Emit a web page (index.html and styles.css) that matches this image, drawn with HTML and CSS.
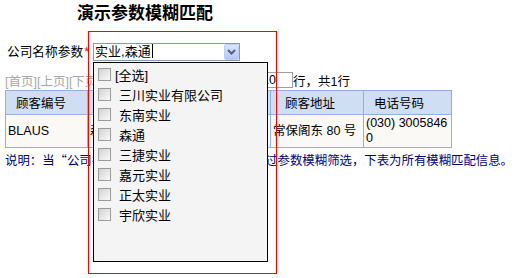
FILE: index.html
```html
<!DOCTYPE html>
<html lang="zh-CN">
<head>
    <meta charset="UTF-8">
    <meta name="viewport" content="width=device-width, initial-scale=1.0">
    <title>演示参数模糊匹配</title>
    <link rel="stylesheet" href="styles.css">
</head>
<body>
    <h1 class="title">演示参数模糊匹配</h1>

    <div class="query-row">
        <label class="query-label">公司名称参数<span class="required">*</span></label>
        <div class="picker">
            <div class="picker-box">
                <span class="picker-value">实业,森通</span>
                <span class="picker-btn">
                    <svg width="9" height="6" viewBox="0 0 9 6"><polyline points="1,1 4.5,4.5 8,1" fill="none" stroke="#4d6185" stroke-width="2"/></svg>
                </span>
            </div>
        </div>
    </div>

    <div class="pager">
        <span class="pager-links">[首页][上页][下页][尾页] 第1页/共1页 每页</span>
        <input class="pager-size" type="text" value="10">
        <span>行，共1行</span>
    </div>

    <table class="grid">
        <tr>
            <th class="c1">顾客编号</th>
            <th class="c2">公司名称</th>
            <th class="c3">联系人姓名</th>
            <th class="c4">顾客地址</th>
            <th class="c5">电话号码</th>
        </tr>
        <tr>
            <td>BLAUS</td>
            <td>森通</td>
            <td>王先生</td>
            <td>常保阁东 80 号</td>
            <td class="phone">(030) 30058460</td>
        </tr>
    </table>

    <p class="note">说明：当“公司名称参数”输入的多个值时，通过参数模糊筛选，下表为所有模糊匹配信息。</p>

    <ul class="picker-list">
        <li class="opt"><span class="check"></span><span>[全选]</span></li>
        <li class="opt"><span class="check"></span><span class="opt-name">三川实业有限公司</span></li>
        <li class="opt"><span class="check"></span><span class="opt-name">东南实业</span></li>
        <li class="opt"><span class="check"></span><span class="opt-name">森通</span></li>
        <li class="opt"><span class="check"></span><span class="opt-name">三捷实业</span></li>
        <li class="opt"><span class="check"></span><span class="opt-name">嘉元实业</span></li>
        <li class="opt"><span class="check"></span><span class="opt-name">正太实业</span></li>
        <li class="opt"><span class="check"></span><span class="opt-name">宇欣实业</span></li>
    </ul>

    <div class="frame"></div>
</body>
</html>
```

FILE: styles.css
```css
* {
    box-sizing: border-box;
}

html, body {
    min-height: 278px;
}

body {
    position: relative;
    margin: 0;
    font-family: 'Liberation Sans', 'Noto Sans CJK SC', sans-serif;
    font-size: 13px;
    color: #000;
    background: #fff;
}

.title {
    width: 290px;
    margin: 0;
    padding-top: 4px;
    font-size: 17px;
    line-height: 20px;
    font-weight: bold;
    text-align: center;
}

.query-row {
    display: flex;
    align-items: center;
    height: 18px;
    margin-top: 19px;
    padding-left: 7px;
    line-height: 18px;
}

.query-label {
    font-size: 12.7px;
}

.required {
    color: #f00;
    margin-left: 1px;
}

.picker {
    margin-left: 4px;
}

.picker-box {
    display: flex;
    align-items: center;
    width: 147px;
    height: 18px;
    border: 1px solid #7f9db9;
    background: #fff;
    padding-left: 1px;
}

.picker-value {
    flex: 1;
    line-height: 16px;
}

.picker-value::after {
    content: '';
    display: inline-block;
    width: 1px;
    height: 14px;
    background: #000;
    vertical-align: -2px;
    margin-left: 1px;
}

.picker-btn {
    display: flex;
    align-items: center;
    justify-content: center;
    width: 15px;
    height: 16px;
    border: 1px solid #b9cdf6;
    border-radius: 2px;
    background: linear-gradient(#d9e4fc, #b5c8f6);
}

/* dropdown of the picker, lies over the pager and the table */
.picker-list {
    position: absolute;
    left: 93px;
    top: 62px;
    width: 175px;
    height: 200px;
    margin: 0;
    padding: 1px 0 0 4px;
    list-style: none;
    border: 1px solid #000;
    background: #f4f4f4;
    z-index: 2;
}

.opt {
    display: flex;
    align-items: center;
    gap: 4px;
    height: 20px;
    font-size: 13px;
}

.check {
    width: 13px;
    height: 13px;
    border: 1px solid #9a9a9a;
    background: linear-gradient(135deg, #d2d2d2, #fbfbfb);
}

.opt-name {
    margin-left: 4px;
}

.pager {
    display: flex;
    align-items: center;
    height: 16px;
    margin-top: 11px;
    padding-left: 5px;
    font-size: 12.5px;
}

.pager-links {
    width: 252px;
    color: #a8a8a8;
    white-space: nowrap;
    overflow: hidden;
}

.pager-size {
    width: 36px;
    height: 16px;
    padding: 0 0 0 4px;
    border: 1px solid #a0a0a0;
    font: inherit;
    text-align: left;
}

.grid {
    margin: 2px 0 0 5px;
    width: 446px;
    border-collapse: collapse;
    table-layout: fixed;
    border: 1px solid #8db2e3;
    font-size: 12.5px;
}

.grid th {
    height: 24px;
    padding: 0 0 0 10px;
    text-align: left;
    font-weight: normal;
    background: #cfdef2;
    border: 1px solid #8db2e3;
    white-space: nowrap;
    overflow: hidden;
}

.grid td {
    height: 33px;
    padding: 0 2px;
    line-height: 15px;
    background: #faf9f5;
    border: 1px solid #8db2e3;
}

.grid .c1 { width: 82px; }
.grid .c2 { width: 95px; }
.grid .c3 { width: 88px; }
.grid .c4 { width: 93px; padding-left: 14px; }
.grid .c5 { width: 88px; }

.grid .phone {
    word-break: break-all;
}

.note {
    margin: 4px 0 0;
    padding-left: 5px;
    font-family: 'Noto Sans CJK SC', sans-serif;
    font-size: 12.4px;
    line-height: 16px;
    color: #00007f;
    white-space: nowrap;
}

.frame {
    position: absolute;
    left: 88px;
    top: 31px;
    width: 189px;
    height: 243px;
    border: 1px solid #f00;
    pointer-events: none;
    z-index: 3;
}
```
